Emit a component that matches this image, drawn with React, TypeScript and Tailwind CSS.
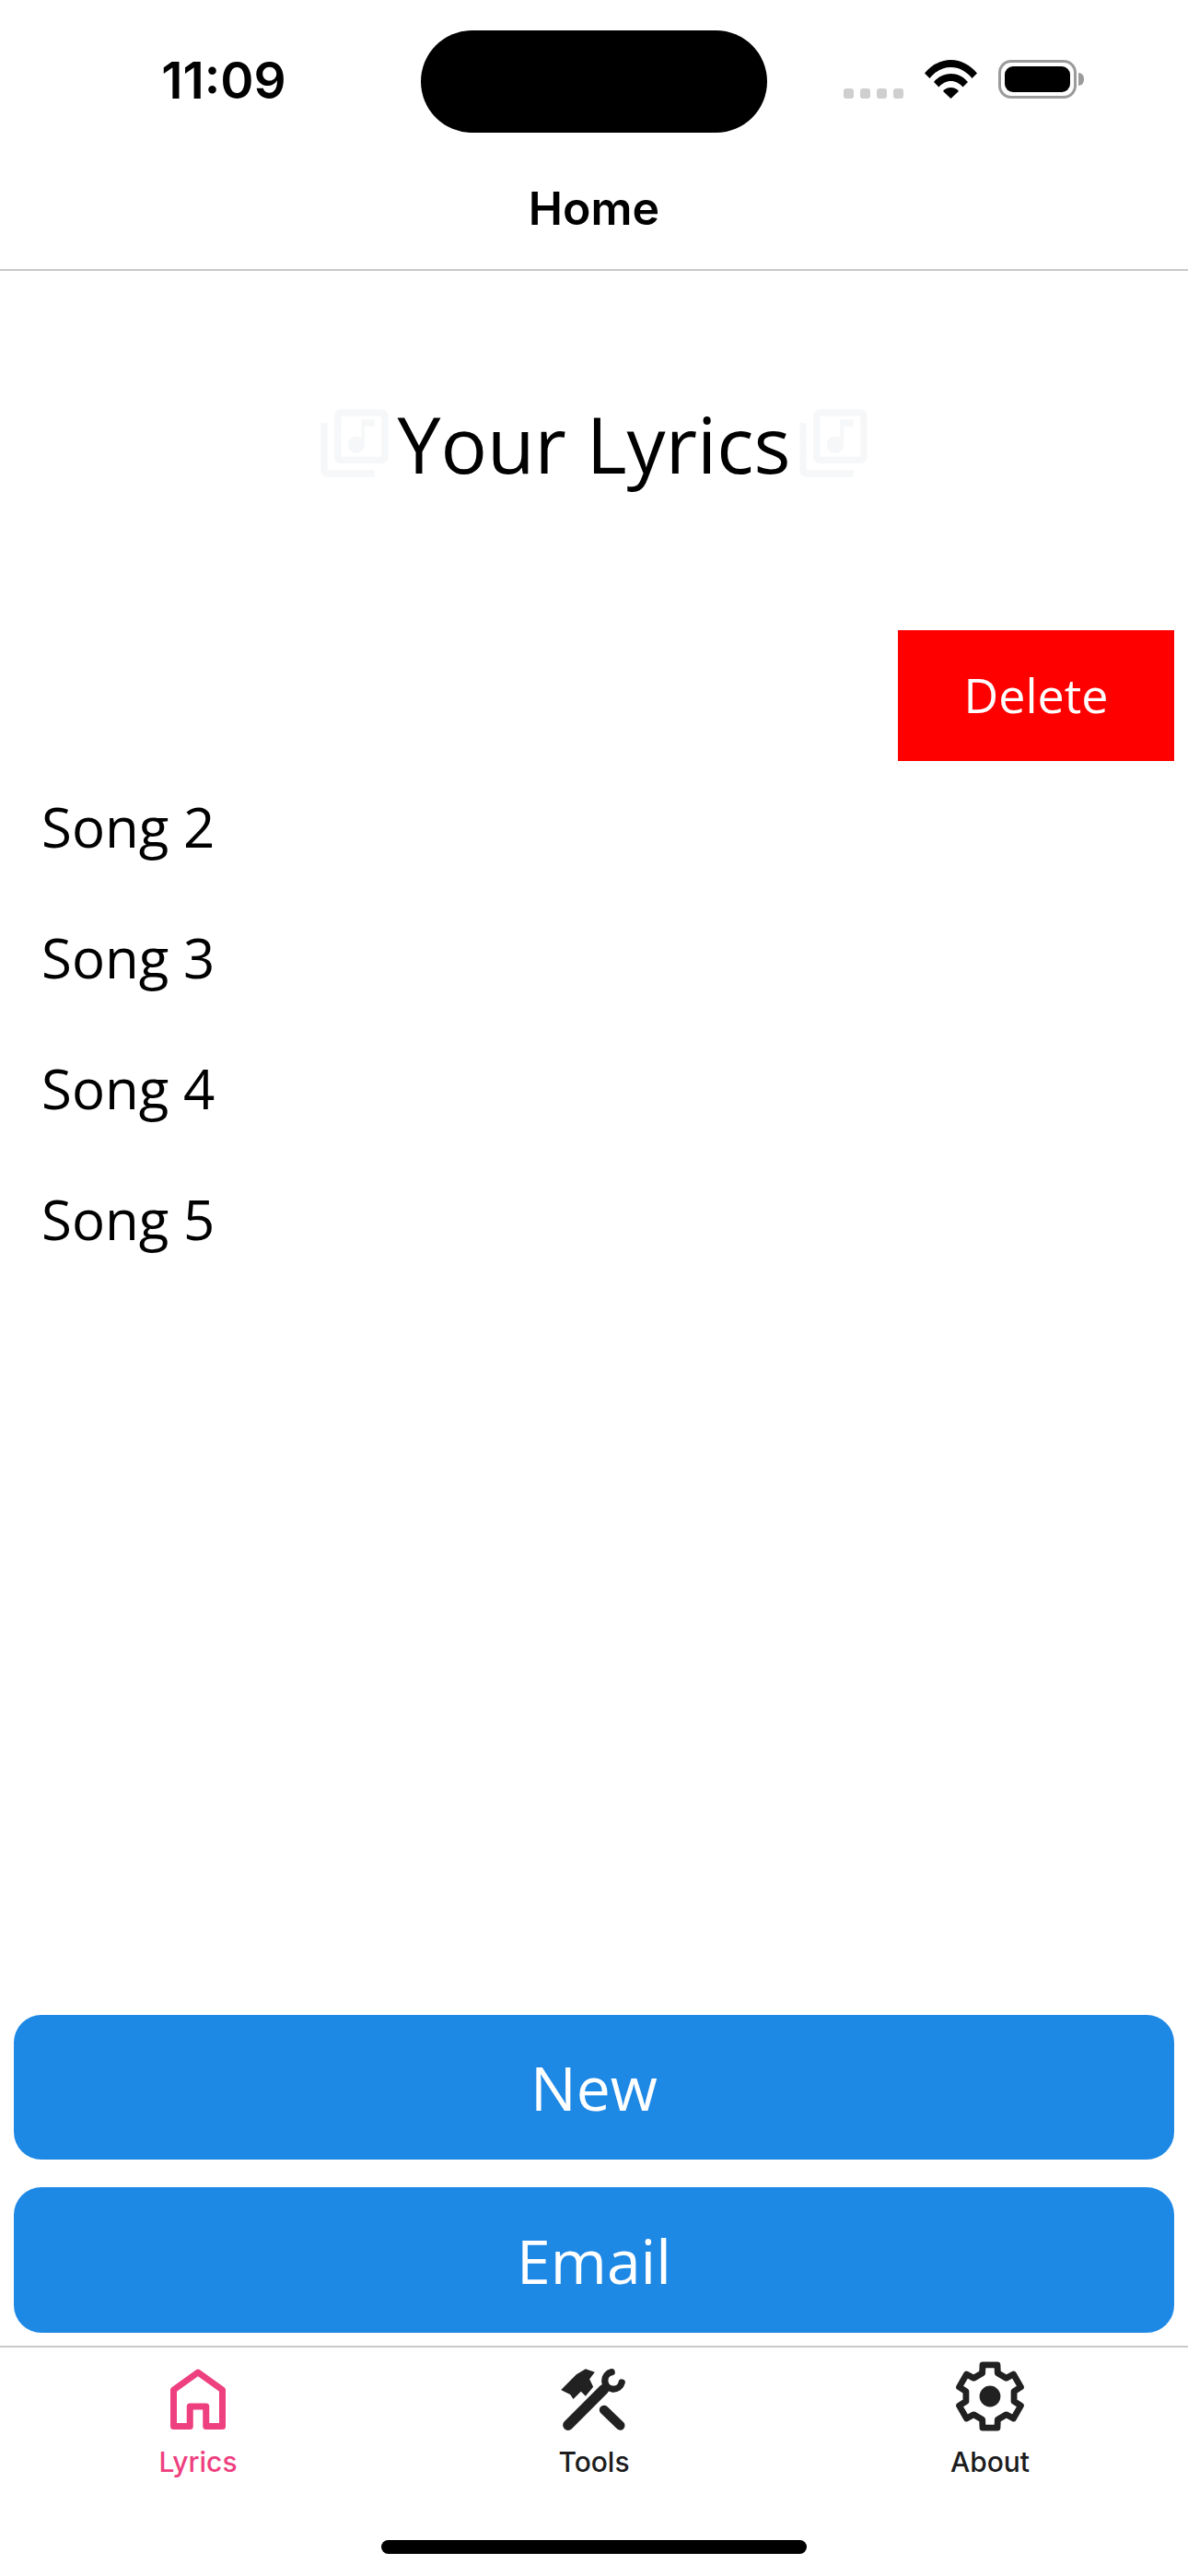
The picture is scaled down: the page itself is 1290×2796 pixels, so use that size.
import React from 'react';
import { MdOutlineLibraryMusic } from 'react-icons/md';

const songs = ['Song 2', 'Song 3', 'Song 4', 'Song 5'];

// six teeth, pointing up and down
const gearPoints = Array.from({ length: 6 })
  .flatMap((_, i) => {
    const a = (i * 60 - 90) * (Math.PI / 180);
    return [
      [-0.32, 35],
      [-0.23, 46],
      [0.23, 46],
      [0.32, 35],
    ].map(([d, r]) => `${(50 + r * Math.cos(a + d)).toFixed(1)},${(50 + r * Math.sin(a + d)).toFixed(1)}`);
  })
  .join(' ');

const StatusBar = () => (
  <div className="h-[165px] flex items-start shrink-0">
    <div className="w-[457px] pt-[58px] pl-[29px] text-center text-[55px] leading-[58px] font-semibold text-black font-['Inter',sans-serif]">
      11:09
    </div>
    <div className="w-[376px] h-[111px] mt-[33px] rounded-full bg-black" />
    <div className="flex items-end mt-[65px] ml-[83px] h-[42px]">
      <div className="flex gap-[7px] mr-[23px]">
        {[0, 1, 2, 3].map((i) => (
          <div key={i} className="w-[11px] h-[11px] rounded-[3px] bg-[#cfcfcf]" />
        ))}
      </div>
      <svg width="57" height="42" viewBox="0 0 57 42" className="mr-[23px]">
        <path d="M0 14.5C7.5 5.5 17.5 0 28.5 0S49.500 5.5 57 14.500L51.500 20C45.500 12.500 37.500 8 28.500 8S11.500 12.500 5.500 20Z" fill="#000" />
        <path d="M10 24C15 18 21.500 15 28.500 15S42 18 47 24L41.500 29.500C38 25.500 33.500 23 28.500 23S19 25.500 15.500 29.500Z" fill="#000" />
        <path d="M20 34C22 31.500 25 30 28.500 30S35 31.500 37 34L28.500 42Z" fill="#000" />
      </svg>
      <div className="w-[85px] h-[42px] rounded-[14px] border-[3px] border-[#9b9b9b] p-[4px] bg-white">
        <div className="w-full h-full rounded-[9px] bg-black" />
      </div>
      <div className="w-[6px] h-[14px] mb-[14px] ml-[2px] rounded-r-full bg-[#9b9b9b]" />
    </div>
  </div>
);

const Header = () => (
  <div className="h-[129px] border-b-[2px] border-[#c9c9c9] flex justify-center pt-[31px] shrink-0">
    <span className="text-[50px] leading-[60px] font-semibold text-black font-['Inter',sans-serif]">Home</span>
  </div>
);

const HomeIcon = () => (
  <svg width="60" height="66" viewBox="0 0 60 66" className="mt-[6px]">
    <path d="M30 4 L56.500 23 V62.500 H38.750 V41 H21.250 V62.500 H3.500 V23 Z" fill="none" stroke="#ee3f7f" strokeWidth="7" strokeLinejoin="round" />
  </svg>
);

const ToolsIcon = () => (
  <svg width="72" height="70" viewBox="85 55 215 210" className="mt-[6px]">
    <path d="M108 245 L225 128" stroke="#212121" strokeWidth="34" strokeLinecap="round" fill="none" />
    <path d="M250 72 A28 28 0 1 0 283 106" stroke="#212121" strokeWidth="22" strokeLinecap="round" fill="none" />
    <path d="M225 195 L278 246" stroke="#212121" strokeWidth="30" strokeLinecap="round" fill="none" />
    <polygon points="85,130 120,95 135,80 165,62 195,72 178,95 190,120 165,150 150,135 125,160 115,145 95,135" fill="#212121" />
  </svg>
);

const GearIcon = () => (
  <svg width="76" height="76" viewBox="0 0 100 100">
    <polygon points={gearPoints} fill="none" stroke="#212121" strokeWidth="9" strokeLinejoin="round" />
    <circle cx="50" cy="50" r="15" fill="#212121" />
  </svg>
);

const TabItem = ({ label, active, children }: { label: string; active?: boolean; children: React.ReactNode }) => (
  <div className="flex-1 flex flex-col items-center">
    <div className="h-[80px] flex items-center justify-center">{children}</div>
    <span className={`mt-[13px] text-[30px] leading-[36px] font-medium font-['Inter',sans-serif] ${active ? 'text-[#ee3f7f]' : 'text-[#1c1c1e]'}`}>
      {label}
    </span>
  </div>
);

export default function App() {
  return (
    <div className="w-[1290px] h-[2796px] bg-white flex flex-col overflow-hidden font-['Open_Sans',sans-serif]">
      <StatusBar />
      <Header />

      <main className="flex-1 flex flex-col">
        <div className="flex items-center justify-center gap-[3px] mt-[132px] h-[112px]">
          <MdOutlineLibraryMusic className="w-[88px] h-[88px] -mt-[3px] text-[#f6f7f8] blur-[0.5px]" />
          <h1 className="text-[84px] leading-[112px] text-black">Your Lyrics</h1>
          <MdOutlineLibraryMusic className="w-[88px] h-[88px] -mt-[3px] text-[#f6f7f8] blur-[0.5px]" />
        </div>

        <div className="mt-[146px] flex justify-end pr-[15px]">
          <button className="w-[300px] h-[142px] pb-[2px] bg-[#ff0000] text-white text-[52px]">Delete</button>
        </div>

        {songs.map((song) => (
          <div key={song} className="h-[142px] flex items-center pl-[45px] text-[60px] text-black">
            {song}
          </div>
        ))}

        <div className="mt-auto px-[15px] flex flex-col gap-[30px] pb-[14px]">
          <button className="h-[157px] rounded-[30px] bg-[#1e88e5] text-white text-[66px]">New</button>
          <button className="h-[158px] rounded-[30px] bg-[#1e88e5] text-white text-[66px]">Email</button>
        </div>
      </main>

      <nav className="h-[250px] border-t-[2px] border-[#c9c9c9] flex flex-col shrink-0">
        <div className="flex pt-[13px]">
          <TabItem label="Lyrics" active>
            <HomeIcon />
          </TabItem>
          <TabItem label="Tools">
            <ToolsIcon />
          </TabItem>
          <TabItem label="About">
            <GearIcon />
          </TabItem>
        </div>
        <div className="mt-auto mb-[24px] mx-auto w-[462px] h-[15px] rounded-full bg-black" />
      </nav>
    </div>
  );
}
